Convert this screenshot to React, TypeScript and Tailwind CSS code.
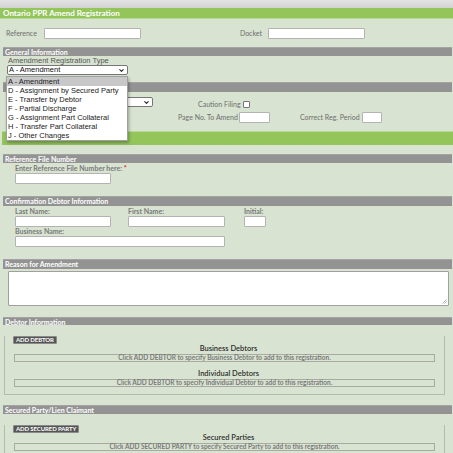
import { ChevronDown } from "lucide-react";

const OPTIONS = [
  "A - Amendment",
  "D - Assignment by Secured Party",
  "E - Transfer by Debtor",
  "F - Partial Discharge",
  "G - Assignment Part Collateral",
  "H - Transfer Part Collateral",
  "J - Other Changes",
];

function Bar({ title, className = "" }: { title?: string; className?: string }) {
  return (
    <div
      className={`ml-[3px] mr-[1px] bg-[#939393] text-white font-bold text-[7px] leading-[9px] px-[2px] border-t border-[#a3a3a3] ${className}`}
    >
      {title}
    </div>
  );
}

function Input({ className = "" }: { className?: string }) {
  return <div className={`h-[11px] bg-white border border-[#b3b3b3] rounded-[1px] ${className}`} />;
}

function Select({ value, className = "" }: { value: string; className?: string }) {
  return (
    <div
      className={`h-[10px] bg-white border border-[#767676] rounded-[2px] flex items-center justify-between pl-[1px] pr-[2px] text-[7.5px] text-[#111] font-['Liberation_Sans',Arial,sans-serif] ${className}`}
    >
      <span>{value}</span>
      <ChevronDown size={7} strokeWidth={3.5} className="text-[#222]" />
    </div>
  );
}

function Button({ label }: { label: string }) {
  return (
    <div className="mt-[11px] ml-[8px] w-fit h-[8px] px-[2px] bg-[#555] border border-[#8a8a8a] text-white text-[6px] leading-[6px] font-bold rounded-[1px] tracking-[-0.1px]">
      {label}
    </div>
  );
}

function DebtorBox({ title, text }: { title: string; text: string }) {
  return (
    <>
      <div className="h-[10px] pl-[8px] text-center text-[7.5px] leading-[10px] text-[#2e2e2e] font-semibold">{title}</div>
      <div className="mx-[9px] h-[8px] border border-[#a8ab9f] text-center text-[6.5px] leading-[6px] text-[#7a7a7a] font-bold">
        {text}
      </div>
    </>
  );
}

export default function App() {
  return (
    <div className="min-h-screen bg-[#d8e3d1] font-['Lato','Open_Sans',sans-serif] text-[#6e6e6e] overflow-hidden">
      <div className="h-[8px] bg-gradient-to-b from-[#e3e3e3] to-[#d2d2d2]" />
      <div className="h-[11px] bg-[#93c55b] border-b border-[#b5d995] text-white font-bold text-[8px] leading-[10px] px-[3px]">
        Ontario PPR Amend Registration
      </div>

      <div className="mt-[9px] h-[11px] flex items-center pl-[6px] text-[7px]">
        <span className="w-[38px]">Reference</span>
        <Input className="w-[97px]" />
        <span className="w-[127px] text-right pr-[6px]">Docket</span>
        <Input className="w-[97px]" />
      </div>

      <Bar title="General Information" className="mt-[8px] h-[9px]" />
      <div className="relative">
        <div className="pl-[8px] h-[9px] text-[7.5px] leading-[9px] text-[#555] font-['Liberation_Sans',Arial,sans-serif]">
          Amendment Registration Type
        </div>
        <Select value="A - Amendment" className="ml-[7px] w-[121px]" />

        <div className="absolute left-[6px] top-[20px] w-[122px] bg-white border border-[#a0a0a0] shadow-[1px_2px_3px_rgba(0,0,0,0.3)] z-10 font-['Liberation_Sans',Arial,sans-serif] text-[7.5px] text-[#222]">
          {OPTIONS.map((o, i) => (
            <div key={o} className={`h-[9px] leading-[9px] pl-[1px] ${i === 0 ? "bg-[#c8c8c8]" : ""}`}>
              {o}
            </div>
          ))}
        </div>

        <Bar className="mt-[7px] h-[10px]" />

        <div className="mt-[5px] h-[10px] flex items-start pl-[7px] text-[7px]">
          <Select value="" className="w-[146px]" />
          <span className="ml-[45px] mt-[4px] leading-[7px]">Caution Filing</span>
          <div className="ml-[2px] mt-[4px] w-[7px] h-[7px] bg-white border border-[#767676] rounded-[1px]" />
        </div>

        <div className="mt-[5px] h-[11px] flex items-center text-[7px]">
          <span className="ml-[178px] w-[61px]">Page No. To Amend</span>
          <Input className="w-[31px]" />
          <span className="ml-[30px] w-[62px]">Correct Reg. Period</span>
          <Input className="w-[20px]" />
        </div>
      </div>

      <div className="mt-[8px] ml-[2px] h-[14px] bg-[#93c55b] border-t border-[#b5d995]" />

      <Bar title="Reference File Number" className="mt-[9px] h-[9px]" />
      <div className="pl-[15px] h-[10px] text-[7px] leading-[10px] font-bold text-[#7a7a7a]">
        Enter Reference File Number here: <span className="text-[#e02020]">*</span>
      </div>
      <Input className="ml-[15px] w-[96px]" />

      <Bar title="Confirmation Debtor Information" className="mt-[12px] h-[10px]" />
      <div className="flex pl-[15px] text-[7px] font-bold text-[#7a7a7a]">
        <div className="w-[113px]">
          <div className="h-[10px] leading-[10px]">Last Name:</div>
          <Input className="w-[96px]" />
        </div>
        <div className="w-[116px]">
          <div className="h-[10px] leading-[10px]">First Name:</div>
          <Input className="w-[97px]" />
        </div>
        <div>
          <div className="h-[10px] leading-[10px]">Initial:</div>
          <Input className="w-[22px]" />
        </div>
      </div>
      <div className="pl-[15px] h-[9px] text-[7px] leading-[9px] font-bold text-[#7a7a7a]">Business Name:</div>
      <Input className="ml-[15px] w-[210px]" />

      <Bar title="Reason for Amendment" className="mt-[12px] h-[10px]" />
      <div className="relative mt-[2px] ml-[8px] w-[441px] h-[35px] bg-white border border-[#a0a0a0] rounded-[1px]">
        <svg className="absolute right-[1px] bottom-[1px]" width="5" height="5" viewBox="0 0 5 5">
          <path d="M4.5 0.5 L0.5 4.5 M4.5 2.5 L2.5 4.5" stroke="#9a9a9a" strokeWidth="0.8" />
        </svg>
      </div>

      <Bar title="Debtor Information" className="mt-[11px] h-[8px] leading-[8px]" />
      <div className="ml-[4px] w-[441px] border border-t-0 border-[#b3bbab] pb-[7px]">
        <Button label="ADD DEBTOR" />
        <DebtorBox title="Business Debtors" text="Click ADD DEBTOR to specify Business Debtor to add to this registration." />
        <div className="h-[7px]" />
        <DebtorBox title="Individual Debtors" text="Click ADD DEBTOR to specify Individual Debtor to add to this registration." />
      </div>

      <Bar title="Secured Party/Lien Claimant" className="mt-[10px] h-[9px]" />
      <div className="ml-[4px] w-[441px] border border-t-0 border-[#b3bbab] pb-[7px]">
        <Button label="ADD SECURED PARTY" />
        <DebtorBox title="Secured Parties" text="Click ADD SECURED PARTY to specify Secured Party to add to this registration." />
      </div>
    </div>
  );
}
